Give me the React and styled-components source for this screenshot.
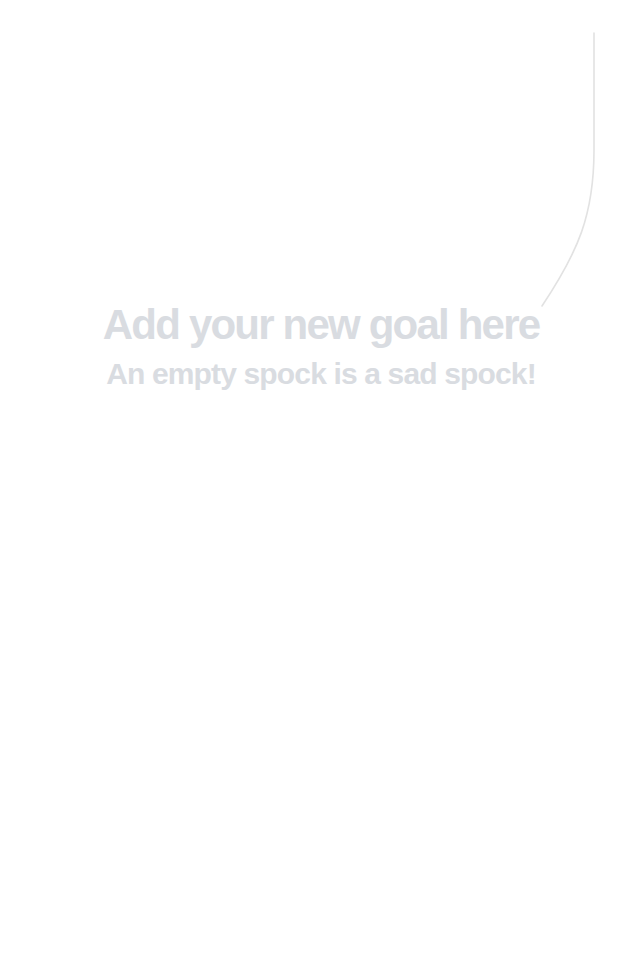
import React from 'react';
import styled, { createGlobalStyle } from 'styled-components';

const GlobalStyle = createGlobalStyle`
  html, body {
    margin: 0;
    padding: 0;
    background: #ffffff;
  }
  body {
    font-family: "Liberation Sans", Arial, sans-serif;
  }
`;

const Screen = styled.div`
  position: relative;
  width: 640px;
  height: 960px;
  background: #ffffff;
  overflow: hidden;
`;

const Hint = styled.svg`
  position: absolute;
  top: 0;
  left: 0;
  pointer-events: none;
`;

const Empty = styled.div`
  display: flex;
  flex-direction: column;
  align-items: center;
  padding-top: 300px;
  padding-left: 2px;
  color: #d9dce1;
  font-weight: 700;
  text-align: center;
`;

const Title = styled.h1`
  margin: 0;
  font-size: 42px;
  line-height: 50px;
  font-weight: 700;
  letter-spacing: -1.8px;
`;

const Subtitle = styled.p`
  margin: 0;
  font-size: 30px;
  line-height: 48px;
  font-weight: 700;
  letter-spacing: -0.85px;
`;

const App = () => {
  return (
    <>
      <GlobalStyle />
      <Screen>
        {/* hint line pointing up toward the add button */}
        <Hint width="640" height="960" viewBox="0 0 640 960">
          <path
            d="M594 33 L594 150 C594 215 578 252 542 306"
            fill="none"
            stroke="#e2e2e2"
            strokeWidth="1.6"
            strokeLinecap="round"
          />
        </Hint>
        <Empty>
          <Title>Add your new goal here</Title>
          <Subtitle>An empty spock is a sad spock!</Subtitle>
        </Empty>
      </Screen>
    </>
  );
};

export default App;
